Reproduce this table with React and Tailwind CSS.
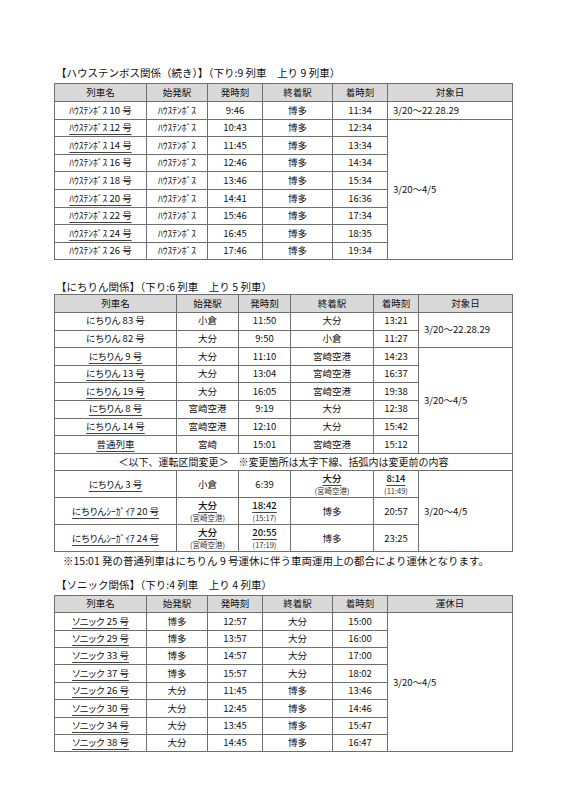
import React from "react";

const td = "border border-[#6f6f6f] p-0 text-center align-middle leading-none";
const th = "border border-[#6f6f6f] p-0 text-center align-middle leading-none font-normal bg-[#d9d9d9]";
const ul = "underline underline-offset-[3px] decoration-[#444] decoration-[0.8px]";
const tbl = "w-[458px] table-fixed border-collapse text-[9.5px] [font-feature-settings:'palt']";
const title = "text-[10.5px] leading-[14px] pl-[2px]";

function Header({ last, h }) {
  const labels = ["列車名", "始発駅", "発時刻", "終着駅", "着時刻", last];
  return (
    <tr className={h}>
      {labels.map((l) => (
        <th key={l} className={th}>{l}</th>
      ))}
    </tr>
  );
}

const htb = [
  ["ﾊｳｽﾃﾝﾎﾞｽ 10 号", false, "9:46", "11:34"],
  ["ﾊｳｽﾃﾝﾎﾞｽ 12 号", true, "10:43", "12:34"],
  ["ﾊｳｽﾃﾝﾎﾞｽ 14 号", true, "11:45", "13:34"],
  ["ﾊｳｽﾃﾝﾎﾞｽ 16 号", false, "12:46", "14:34"],
  ["ﾊｳｽﾃﾝﾎﾞｽ 18 号", false, "13:46", "15:34"],
  ["ﾊｳｽﾃﾝﾎﾞｽ 20 号", true, "14:41", "16:36"],
  ["ﾊｳｽﾃﾝﾎﾞｽ 22 号", true, "15:46", "17:34"],
  ["ﾊｳｽﾃﾝﾎﾞｽ 24 号", true, "16:45", "18:35"],
  ["ﾊｳｽﾃﾝﾎﾞｽ 26 号", false, "17:46", "19:34"],
];

const nich = [
  ["にちりん 83 号", false, "小倉", "11:50", "大分", "13:21"],
  ["にちりん 82 号", false, "大分", "9:50", "小倉", "11:27"],
  ["にちりん 9 号", true, "大分", "11:10", "宮崎空港", "14:23"],
  ["にちりん 13 号", true, "大分", "13:04", "宮崎空港", "16:37"],
  ["にちりん 19 号", true, "大分", "16:05", "宮崎空港", "19:38"],
  ["にちりん 8 号", true, "宮崎空港", "9:19", "大分", "12:38"],
  ["にちりん 14 号", true, "宮崎空港", "12:10", "大分", "15:42"],
  ["普通列車", true, "宮崎", "15:01", "宮崎空港", "15:12"],
];

const sonic = [
  ["ソニック 25 号", "博多", "12:57", "大分", "15:00"],
  ["ソニック 29 号", "博多", "13:57", "大分", "16:00"],
  ["ソニック 33 号", "博多", "14:57", "大分", "17:00"],
  ["ソニック 37 号", "博多", "15:57", "大分", "18:02"],
  ["ソニック 26 号", "大分", "11:45", "博多", "13:46"],
  ["ソニック 30 号", "大分", "12:45", "博多", "14:46"],
  ["ソニック 34 号", "大分", "13:45", "博多", "15:47"],
  ["ソニック 38 号", "大分", "14:45", "博多", "16:47"],
];

function Two({ top, bottom }) {
  return (
    <div className="flex flex-col items-center gap-[4px]">
      <span className={`${ul} font-medium`}>{top}</span>
      <span className="text-[7.5px] text-[#333]">{bottom}</span>
    </div>
  );
}

const dateCell = "border border-[#6f6f6f] p-0 pl-[5px] text-left align-middle leading-none";

export default function App() {
  return (
    <div className="w-[566px] h-[800px] bg-white text-[#111] font-['Noto_Sans_CJK_JP',sans-serif] pt-[66px] pl-[54px]">
      <div className={`${title} mb-[3px]`}>
        【ハウステンボス関係（続き）】（下り:9 列車　上り 9 列車）
      </div>
      <table className={tbl}>
        <colgroup>
          <col className="w-[92px]" />
          <col className="w-[61px]" />
          <col className="w-[55px]" />
          <col className="w-[70px]" />
          <col className="w-[55px]" />
          <col className="w-[125px]" />
        </colgroup>
        <tbody>
          <Header last="対象日" h="h-[18px]" />
          {htb.map((r, i) => (
            <tr key={r[0]} className="h-[17.6px]">
              <td className={td}>
                <span className={r[1] ? ul : ""}>{r[0]}</span>
              </td>
              <td className={td}>ﾊｳｽﾃﾝﾎﾞｽ</td>
              <td className={td}>{r[2]}</td>
              <td className={td}>博多</td>
              <td className={td}>{r[3]}</td>
              {i === 0 && <td className={dateCell}>3/20～22.28.29</td>}
              {i === 1 && (
                <td className={dateCell} rowSpan={8}>
                  3/20～4/5
                </td>
              )}
            </tr>
          ))}
        </tbody>
      </table>

      <div className={`${title} mt-[19.6px]`}>
        【にちりん関係】（下り:6 列車　上り 5 列車）
      </div>
      <table className={tbl}>
        <colgroup>
          <col className="w-[122px]" />
          <col className="w-[62px]" />
          <col className="w-[52px]" />
          <col className="w-[83px]" />
          <col className="w-[45px]" />
          <col className="w-[94px]" />
        </colgroup>
        <tbody>
          <Header last="対象日" h="h-[18px]" />
          {nich.map((r, i) => (
            <tr key={r[0]} className="h-[17.6px]">
              <td className={td}>
                <span className={r[1] ? ul : ""}>{r[0]}</span>
              </td>
              <td className={td}>{r[2]}</td>
              <td className={td}>{r[3]}</td>
              <td className={td}>{r[4]}</td>
              <td className={td}>{r[5]}</td>
              {i === 0 && (
                <td className={dateCell} rowSpan={2}>
                  3/20～22.28.29
                </td>
              )}
              {i === 2 && (
                <td className={dateCell} rowSpan={6}>
                  3/20～4/5
                </td>
              )}
            </tr>
          ))}
          <tr className="h-[17.6px]">
            <td className={`${td} text-[10px] [font-feature-settings:normal]`} colSpan={6}>
              ＜以下、運転区間変更＞　※変更箇所は太字下線、括弧内は変更前の内容
            </td>
          </tr>
          <tr className="h-[27px]">
            <td className={td}>
              <span className={ul}>にちりん 3 号</span>
            </td>
            <td className={td}>小倉</td>
            <td className={td}>6:39</td>
            <td className={td}>
              <Two top="大分" bottom="(宮崎空港)" />
            </td>
            <td className={td}>
              <Two top="8:14" bottom="(11:49)" />
            </td>
            <td className={dateCell} rowSpan={3}>
              3/20～4/5
            </td>
          </tr>
          <tr className="h-[27px]">
            <td className={td}>
              <span className={ul}>にちりんｼｰｶﾞｲｱ 20 号</span>
            </td>
            <td className={td}>
              <Two top="大分" bottom="(宮崎空港)" />
            </td>
            <td className={td}>
              <Two top="18:42" bottom="(15:17)" />
            </td>
            <td className={td}>博多</td>
            <td className={td}>20:57</td>
          </tr>
          <tr className="h-[27px]">
            <td className={td}>
              <span className={ul}>にちりんｼｰｶﾞｲｱ 24 号</span>
            </td>
            <td className={td}>
              <Two top="大分" bottom="(宮崎空港)" />
            </td>
            <td className={td}>
              <Two top="20:55" bottom="(17:19)" />
            </td>
            <td className={td}>博多</td>
            <td className={td}>23:25</td>
          </tr>
        </tbody>
      </table>
      <div className="text-[10.5px] leading-[14px] pl-[9px] mt-[1.6px]">
        ※15:01 発の普通列車はにちりん 9 号運休に伴う車両運用上の都合により運休となります。
      </div>

      <div className={`${title} mt-[10px] mb-[3px]`}>
        【ソニック関係】（下り:4 列車　上り 4 列車）
      </div>
      <table className={tbl}>
        <colgroup>
          <col className="w-[92px]" />
          <col className="w-[61px]" />
          <col className="w-[55px]" />
          <col className="w-[70px]" />
          <col className="w-[55px]" />
          <col className="w-[125px]" />
        </colgroup>
        <tbody>
          <Header last="運休日" h="h-[17.4px]" />
          {sonic.map((r, i) => (
            <tr key={r[0]} className="h-[17.4px]">
              <td className={td}>
                <span className={ul}>{r[0]}</span>
              </td>
              <td className={td}>{r[1]}</td>
              <td className={td}>{r[2]}</td>
              <td className={td}>{r[3]}</td>
              <td className={td}>{r[4]}</td>
              {i === 0 && (
                <td className={dateCell} rowSpan={8}>
                  3/20～4/5
                </td>
              )}
            </tr>
          ))}
        </tbody>
      </table>
    </div>
  );
}
